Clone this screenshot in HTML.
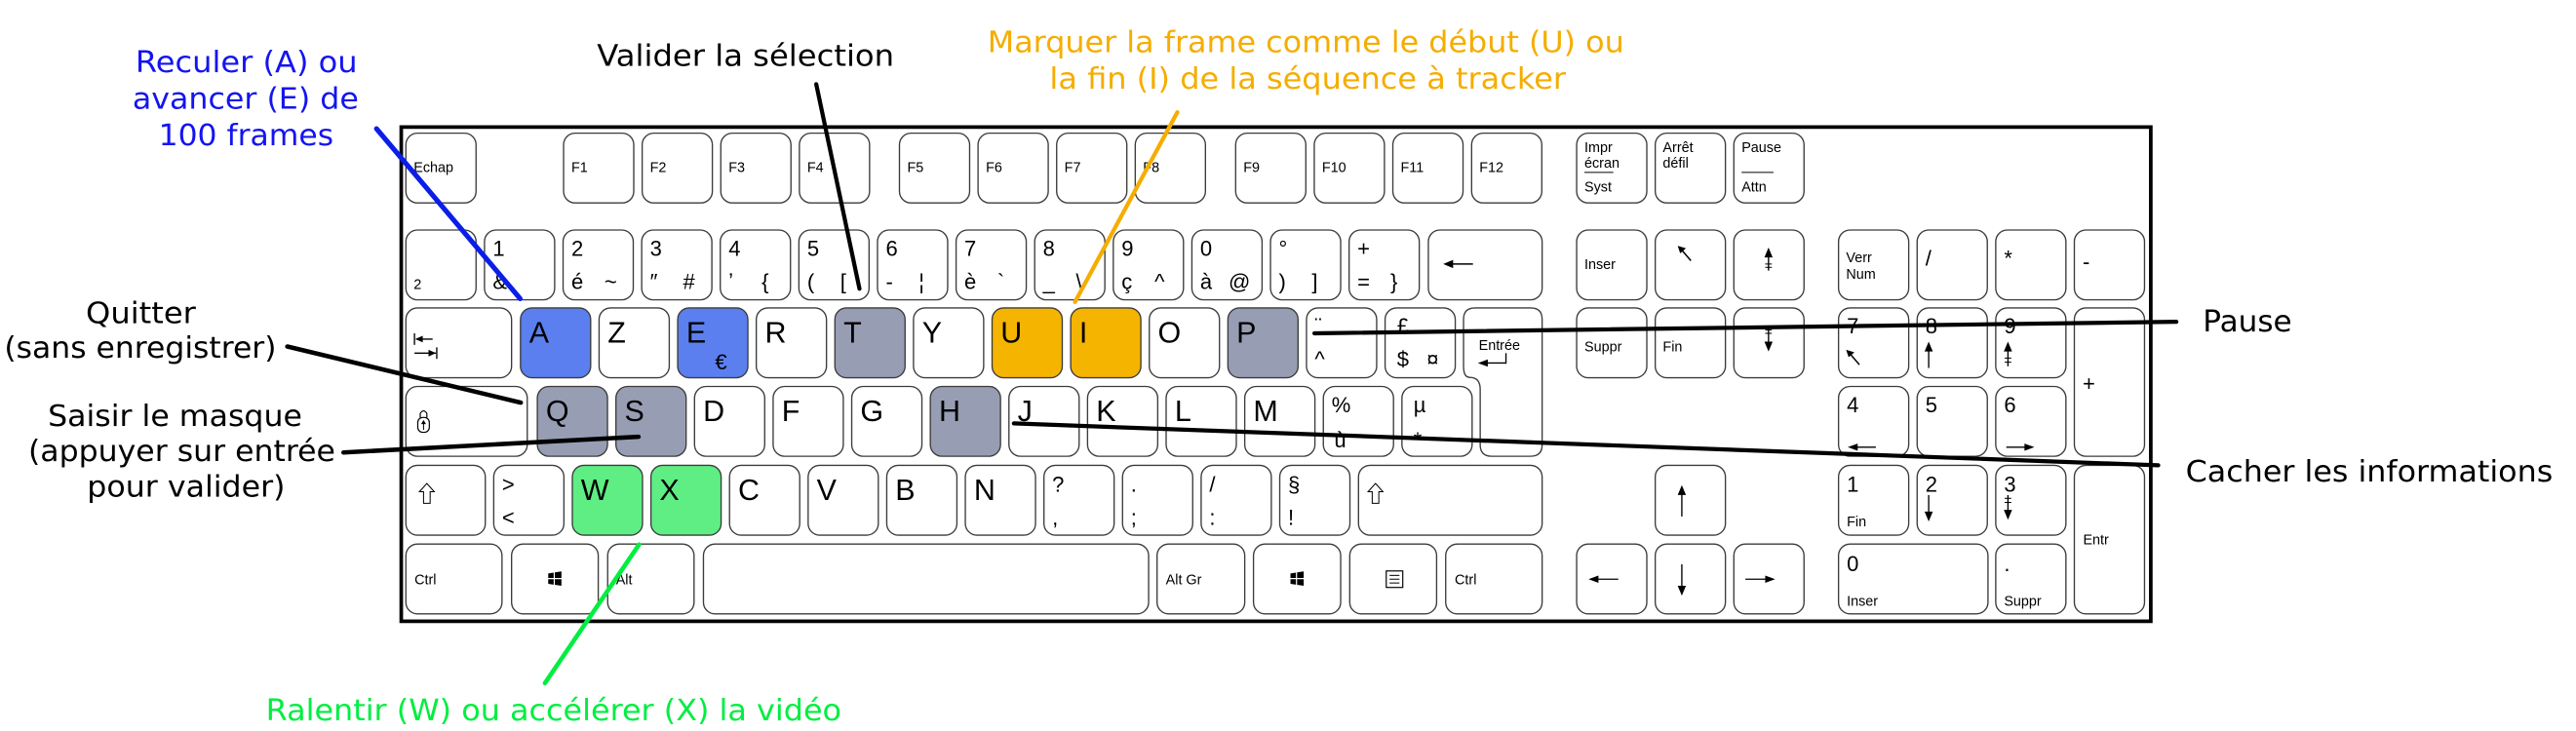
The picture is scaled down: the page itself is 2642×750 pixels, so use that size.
<!DOCTYPE html>
<html><head><meta charset="utf-8">
<style>
html,body{margin:0;padding:0;background:#fff;width:2642px;height:750px;overflow:hidden}
svg{display:block}
.k{fill:#fff;stroke:#3c3c3c;stroke-width:0.8}
.b{fill:#5b7fee}.g{fill:#979db3}.o{fill:#f5b400}.gr{fill:#5eee84}
text{font-family:"Liberation Sans","DejaVu Sans",sans-serif;fill:#000}
.L{font-size:18px}
.n{font-size:13px}
.s{font-size:8.5px}
.a{font-family:"DejaVu Sans","Liberation Sans",sans-serif;font-size:18px}
</style></head><body>
<svg width="2642" height="750" viewBox="0 0 1560 443" preserveAspectRatio="none" xmlns="http://www.w3.org/2000/svg">
<rect x="0" y="0" width="1560" height="443" fill="#fff"/>
<rect x="243" y="77" width="1059.5" height="299.5" fill="#fff" stroke="#000" stroke-width="2.2"/>
<g>
<!-- F row -->
<rect class="k" x="245.8" y="80.7" width="42.5" height="42.3" rx="7"/><text class="s" x="250.5" y="104.4">Echap</text>
<rect class="k" x="341.3" y="80.7" width="42.5" height="42.3" rx="7"/><text class="s" x="346" y="104.4">F1</text>
<rect class="k" x="388.9" y="80.7" width="42.5" height="42.3" rx="7"/><text class="s" x="393.6" y="104.4">F2</text>
<rect class="k" x="436.5" y="80.7" width="42.5" height="42.3" rx="7"/><text class="s" x="441.2" y="104.4">F3</text>
<rect class="k" x="484.1" y="80.7" width="42.5" height="42.3" rx="7"/><text class="s" x="488.8" y="104.4">F4</text>
<rect class="k" x="544.7" y="80.7" width="42.5" height="42.3" rx="7"/><text class="s" x="549.4" y="104.4">F5</text>
<rect class="k" x="592.3" y="80.7" width="42.5" height="42.3" rx="7"/><text class="s" x="597" y="104.4">F6</text>
<rect class="k" x="639.9" y="80.7" width="42.5" height="42.3" rx="7"/><text class="s" x="644.6" y="104.4">F7</text>
<rect class="k" x="687.5" y="80.7" width="42.5" height="42.3" rx="7"/><text class="s" x="692.2" y="104.4">F8</text>
<rect class="k" x="748.3" y="80.7" width="42.5" height="42.3" rx="7"/><text class="s" x="753" y="104.4">F9</text>
<rect class="k" x="795.9" y="80.7" width="42.5" height="42.3" rx="7"/><text class="s" x="800.6" y="104.4">F10</text>
<rect class="k" x="843.5" y="80.7" width="42.5" height="42.3" rx="7"/><text class="s" x="848.2" y="104.4">F11</text>
<rect class="k" x="891.2" y="80.7" width="42.5" height="42.3" rx="7"/><text class="s" x="895.9" y="104.4">F12</text>
<rect class="k" x="954.8" y="80.7" width="42.5" height="42.3" rx="7"/><text class="s" x="959.5" y="92">Impr</text><text class="s" x="959.5" y="101.5">écran</text><line x1="959.5" y1="104.5" x2="977" y2="104.5" stroke="#000" stroke-width="0.6"/><text class="s" x="959.5" y="116">Syst</text>
<rect class="k" x="1002.4" y="80.7" width="42.5" height="42.3" rx="7"/><text class="s" x="1007" y="92">Arrêt</text><text class="s" x="1007" y="101.5">défil</text>
<rect class="k" x="1050" y="80.7" width="42.5" height="42.3" rx="7"/><text class="s" x="1054.7" y="92">Pause</text><line x1="1054.7" y1="104.5" x2="1074" y2="104.5" stroke="#000" stroke-width="0.6"/><text class="s" x="1054.7" y="116">Attn</text>

<!-- Row 1 -->
<rect class="k" x="245.8" y="139.4" width="42.5" height="42.3" rx="7"/><text class="s" x="250.5" y="175">2</text>
<rect class="k" x="293.4" y="139.4" width="42.5" height="42.3" rx="7"/><text class="n" x="298.4" y="155">1</text><text class="n" x="298.4" y="175">&amp;</text>
<rect class="k" x="341" y="139.4" width="42.5" height="42.3" rx="7"/><text class="n" x="346" y="155">2</text><text class="n" x="346" y="175">é</text><text class="n" x="366" y="175">~</text>
<rect class="k" x="388.6" y="139.4" width="42.5" height="42.3" rx="7"/><text class="n" x="393.6" y="155">3</text><text class="n" x="393.6" y="175">″</text><text class="n" x="413.6" y="175">#</text>
<rect class="k" x="436.2" y="139.4" width="42.5" height="42.3" rx="7"/><text class="n" x="441.2" y="155">4</text><text class="n" x="441.2" y="175">ʼ</text><text class="n" x="461.2" y="175">{</text>
<rect class="k" x="483.8" y="139.4" width="42.5" height="42.3" rx="7"/><text class="n" x="488.8" y="155">5</text><text class="n" x="488.8" y="175">(</text><text class="n" x="508.8" y="175">[</text>
<rect class="k" x="531.4" y="139.4" width="42.5" height="42.3" rx="7"/><text class="n" x="536.4" y="155">6</text><text class="n" x="536.4" y="175">-</text><text class="n" x="556.4" y="175">¦</text>
<rect class="k" x="579" y="139.4" width="42.5" height="42.3" rx="7"/><text class="n" x="584" y="155">7</text><text class="n" x="584" y="175">è</text><text class="n" x="604" y="175">`</text>
<rect class="k" x="626.6" y="139.4" width="42.5" height="42.3" rx="7"/><text class="n" x="631.6" y="155">8</text><text class="n" x="631.6" y="175">_</text><text class="n" x="651.6" y="175">\</text>
<rect class="k" x="674.2" y="139.4" width="42.5" height="42.3" rx="7"/><text class="n" x="679.2" y="155">9</text><text class="n" x="679.2" y="175">ç</text><text class="n" x="699.2" y="175">^</text>
<rect class="k" x="721.8" y="139.4" width="42.5" height="42.3" rx="7"/><text class="n" x="726.8" y="155">0</text><text class="n" x="726.8" y="175">à</text><text class="n" x="744" y="175">@</text>
<rect class="k" x="769.4" y="139.4" width="42.5" height="42.3" rx="7"/><text class="n" x="774.4" y="155">°</text><text class="n" x="774.4" y="175">)</text><text class="n" x="794.4" y="175">]</text>
<rect class="k" x="817" y="139.4" width="42.5" height="42.3" rx="7"/><text class="n" x="822" y="155">+</text><text class="n" x="822" y="175">=</text><text class="n" x="842" y="175">}</text>
<rect class="k" x="865" y="139.4" width="68.9" height="42.3" rx="7"/><line x1="876" y1="160" x2="892" y2="160" stroke="#000" stroke-width="0.9"/><path d="M874,160 L880,157.5 L880,162.5 Z" fill="#000"/>
<rect class="k" x="954.8" y="139.4" width="42.5" height="42.3" rx="7"/><text class="s" x="959.5" y="163">Inser</text>
<rect class="k" x="1002.4" y="139.4" width="42.5" height="42.3" rx="7"/><line x1="1018" y1="151" x2="1024" y2="158" stroke="#000" stroke-width="0.9"/><path d="M1016,149 L1021,150.5 L1017.5,153.5 Z" fill="#000"/>
<rect class="k" x="1050" y="139.4" width="42.5" height="42.3" rx="7"/><line x1="1071" y1="152" x2="1071" y2="164" stroke="#000" stroke-width="0.8"/><path d="M1071,150 L1068.5,156 L1073.5,156 Z" fill="#000"/><line x1="1069" y1="160" x2="1073" y2="160" stroke="#000" stroke-width="0.6"/><line x1="1069" y1="162" x2="1073" y2="162" stroke="#000" stroke-width="0.6"/>
<rect class="k" x="1113.4" y="139.4" width="42.5" height="42.3" rx="7"/><text class="s" x="1118" y="159">Verr</text><text class="s" x="1118" y="169">Num</text>
<rect class="k" x="1161" y="139.4" width="42.5" height="42.3" rx="7"/><text class="n" x="1166" y="161">/</text>
<rect class="k" x="1208.6" y="139.4" width="42.5" height="42.3" rx="7"/><text class="n" x="1213.6" y="161">*</text>
<rect class="k" x="1256.2" y="139.4" width="42.5" height="42.3" rx="7"/><text class="n" x="1261.2" y="163">-</text>

<!-- Row 2 -->
<rect class="k" x="245.8" y="186.6" width="64" height="42.3" rx="7"/><line x1="251" y1="202" x2="251" y2="209" stroke="#000" stroke-width="0.8"/><line x1="252" y1="205.5" x2="262" y2="205.5" stroke="#000" stroke-width="0.8"/><path d="M251.5,205.5 L256,203.5 L256,207.5 Z" fill="#000"/><line x1="251" y1="214" x2="264" y2="214" stroke="#000" stroke-width="0.8"/><line x1="264.5" y1="210.5" x2="264.5" y2="217.5" stroke="#000" stroke-width="0.8"/><path d="M264,214 L259.5,212 L259.5,216 Z" fill="#000"/>
<rect class="k b" x="315.2" y="186.6" width="42.5" height="42.3" rx="7"/><text class="L" x="320.5" y="207.6">A</text>
<rect class="k" x="362.8" y="186.6" width="42.5" height="42.3" rx="7"/><text class="L" x="368" y="207.6">Z</text>
<rect class="k b" x="410.4" y="186.6" width="42.5" height="42.3" rx="7"/><text class="L" x="415.6" y="207.6">E</text><text class="n" x="433" y="224">€</text>
<rect class="k" x="458" y="186.6" width="42.5" height="42.3" rx="7"/><text class="L" x="463.2" y="207.6">R</text>
<rect class="k g" x="505.6" y="186.6" width="42.5" height="42.3" rx="7"/><text class="L" x="510.8" y="207.6">T</text>
<rect class="k" x="553.2" y="186.6" width="42.5" height="42.3" rx="7"/><text class="L" x="558.4" y="207.6">Y</text>
<rect class="k o" x="600.8" y="186.6" width="42.5" height="42.3" rx="7"/><text class="L" x="606" y="207.6">U</text>
<rect class="k o" x="648.4" y="186.6" width="42.5" height="42.3" rx="7"/><text class="L" x="653.6" y="207.6">I</text>
<rect class="k" x="696" y="186.6" width="42.5" height="42.3" rx="7"/><text class="L" x="701.2" y="207.6">O</text>
<rect class="k g" x="743.6" y="186.6" width="42.5" height="42.3" rx="7"/><text class="L" x="748.8" y="207.6">P</text>
<rect class="k" x="791.2" y="186.6" width="42.5" height="42.3" rx="7"/><text class="n" x="796.2" y="202">¨</text><text class="n" x="796.2" y="222">^</text>
<rect class="k" x="838.8" y="186.6" width="42.5" height="42.3" rx="7"/><text class="n" x="846" y="202">£</text><text class="n" x="846" y="222">$</text><text class="n" x="864" y="222">¤</text>
<path class="k" d="M893.3,186.6 H927 Q933.9,186.6 933.9,193.5 V269.6 Q933.9,276.5 927,276.5 H903.3 Q896.4,276.5 896.4,269.6 V236 Q896.4,228.7 890,228.7 Q886.3,228.7 886.3,222 V193.5 Q886.3,186.6 893.3,186.6 Z"/>
<text class="s" x="895.5" y="212">Entrée</text><line x1="897" y1="220" x2="912" y2="220" stroke="#000" stroke-width="0.8"/><line x1="912" y1="214" x2="912" y2="220.4" stroke="#000" stroke-width="0.8"/><path d="M895,220 L901,217.8 L901,222.2 Z" fill="#000"/>
<rect class="k" x="954.8" y="186.6" width="42.5" height="42.3" rx="7"/><text class="s" x="959.5" y="213">Suppr</text>
<rect class="k" x="1002.4" y="186.6" width="42.5" height="42.3" rx="7"/><text class="s" x="1007" y="213">Fin</text>
<rect class="k" x="1050" y="186.6" width="42.5" height="42.3" rx="7"/><line x1="1071" y1="198" x2="1071" y2="210" stroke="#000" stroke-width="0.8"/><path d="M1071,213 L1068.5,207 L1073.5,207 Z" fill="#000"/><line x1="1069" y1="200" x2="1073" y2="200" stroke="#000" stroke-width="0.6"/><line x1="1069" y1="202" x2="1073" y2="202" stroke="#000" stroke-width="0.6"/>
<rect class="k" x="1113.4" y="186.6" width="42.5" height="42.3" rx="7"/><text class="n" x="1118.4" y="202">7</text><line x1="1120" y1="214" x2="1126" y2="221" stroke="#000" stroke-width="0.9"/><path d="M1118,212 L1123,213.5 L1119.5,216.5 Z" fill="#000"/>
<rect class="k" x="1161" y="186.6" width="42.5" height="42.3" rx="7"/><text class="n" x="1166" y="202">8</text><line x1="1168" y1="210" x2="1168" y2="223" stroke="#000" stroke-width="0.8"/><path d="M1168,207 L1165.5,213 L1170.5,213 Z" fill="#000"/>
<rect class="k" x="1208.6" y="186.6" width="42.5" height="42.3" rx="7"/><text class="n" x="1213.6" y="202">9</text><line x1="1216" y1="210" x2="1216" y2="222" stroke="#000" stroke-width="0.8"/><path d="M1216,207 L1213.5,213 L1218.5,213 Z" fill="#000"/><line x1="1214" y1="217" x2="1218" y2="217" stroke="#000" stroke-width="0.6"/><line x1="1214" y1="219.5" x2="1218" y2="219.5" stroke="#000" stroke-width="0.6"/>
<rect class="k" x="1256.2" y="186.6" width="42.5" height="89.9" rx="7"/><text class="n" x="1261.2" y="237">+</text>

<!-- Row 3 -->
<rect class="k" x="245.8" y="234.2" width="73.5" height="42.3" rx="7"/><rect x="253" y="253" width="7" height="9" rx="3" fill="#fff" stroke="#000" stroke-width="0.7"/><path d="M254.5,253 V250.5 Q256.5,247.5 258.5,250.5 V253" fill="none" stroke="#000" stroke-width="0.7"/><path d="M256.5,254.5 L258,257 L255,257 Z M256.2,257 H256.8 V260.5 H256.2 Z" fill="#000"/>
<rect class="k g" x="325.4" y="234.2" width="42.5" height="42.3" rx="7"/><text class="L" x="330.6" y="255.2">Q</text>
<rect class="k g" x="373" y="234.2" width="42.5" height="42.3" rx="7"/><text class="L" x="378.2" y="255.2">S</text>
<rect class="k" x="420.6" y="234.2" width="42.5" height="42.3" rx="7"/><text class="L" x="425.8" y="255.2">D</text>
<rect class="k" x="468.2" y="234.2" width="42.5" height="42.3" rx="7"/><text class="L" x="473.4" y="255.2">F</text>
<rect class="k" x="515.8" y="234.2" width="42.5" height="42.3" rx="7"/><text class="L" x="521" y="255.2">G</text>
<rect class="k g" x="563.4" y="234.2" width="42.5" height="42.3" rx="7"/><text class="L" x="568.6" y="255.2">H</text>
<rect class="k" x="611" y="234.2" width="42.5" height="42.3" rx="7"/><text class="L" x="616.2" y="255.2">J</text>
<rect class="k" x="658.6" y="234.2" width="42.5" height="42.3" rx="7"/><text class="L" x="663.8" y="255.2">K</text>
<rect class="k" x="706.2" y="234.2" width="42.5" height="42.3" rx="7"/><text class="L" x="711.4" y="255.2">L</text>
<rect class="k" x="753.8" y="234.2" width="42.5" height="42.3" rx="7"/><text class="L" x="759" y="255.2">M</text>
<rect class="k" x="801.4" y="234.2" width="42.5" height="42.3" rx="7"/><text class="n" x="806.4" y="250">%</text><text class="n" x="808" y="271">ù</text>
<rect class="k" x="849" y="234.2" width="42.5" height="42.3" rx="7"/><text class="n" x="856" y="250">µ</text><text class="n" x="856" y="271">*</text>
<rect class="k" x="1113.4" y="234.2" width="42.5" height="42.3" rx="7"/><text class="n" x="1118.4" y="250">4</text><line x1="1122" y1="271" x2="1136" y2="271" stroke="#000" stroke-width="0.8"/><path d="M1119,271 L1125,268.8 L1125,273.2 Z" fill="#000"/>
<rect class="k" x="1161" y="234.2" width="42.5" height="42.3" rx="7"/><text class="n" x="1166" y="250">5</text>
<rect class="k" x="1208.6" y="234.2" width="42.5" height="42.3" rx="7"/><text class="n" x="1213.6" y="250">6</text><line x1="1215" y1="271" x2="1229" y2="271" stroke="#000" stroke-width="0.8"/><path d="M1232,271 L1226,268.8 L1226,273.2 Z" fill="#000"/>

<!-- Row 4 -->
<rect class="k" x="245.8" y="282" width="48.1" height="42.3" rx="7"/><path d="M254,298 L258.5,293 L263,298 L260.5,298 L260.5,305 L256.5,305 L256.5,298 Z" fill="#fff" stroke="#000" stroke-width="0.6"/>
<rect class="k" x="299" y="282" width="42.5" height="42.3" rx="7"/><text class="n" x="304" y="298">&gt;</text><text class="n" x="304" y="318">&lt;</text>
<rect class="k gr" x="346.6" y="282" width="42.5" height="42.3" rx="7"/><text class="L" x="351.8" y="303">W</text>
<rect class="k gr" x="394.2" y="282" width="42.5" height="42.3" rx="7"/><text class="L" x="399.4" y="303">X</text>
<rect class="k" x="441.8" y="282" width="42.5" height="42.3" rx="7"/><text class="L" x="447" y="303">C</text>
<rect class="k" x="489.4" y="282" width="42.5" height="42.3" rx="7"/><text class="L" x="494.6" y="303">V</text>
<rect class="k" x="537" y="282" width="42.5" height="42.3" rx="7"/><text class="L" x="542.2" y="303">B</text>
<rect class="k" x="584.6" y="282" width="42.5" height="42.3" rx="7"/><text class="L" x="589.8" y="303">N</text>
<rect class="k" x="632.2" y="282" width="42.5" height="42.3" rx="7"/><text class="n" x="637.2" y="298">?</text><text class="n" x="637.2" y="318">,</text>
<rect class="k" x="679.8" y="282" width="42.5" height="42.3" rx="7"/><text class="n" x="684.8" y="298">.</text><text class="n" x="684.8" y="318">;</text>
<rect class="k" x="727.4" y="282" width="42.5" height="42.3" rx="7"/><text class="n" x="732.4" y="298">/</text><text class="n" x="732.4" y="318">:</text>
<rect class="k" x="775" y="282" width="42.5" height="42.3" rx="7"/><text class="n" x="780" y="298">§</text><text class="n" x="780" y="318">!</text>
<rect class="k" x="822.7" y="282" width="111.2" height="42.3" rx="7"/><path d="M828.5,298 L833,293 L837.5,298 L835,298 L835,305 L831,305 L831,298 Z" fill="#fff" stroke="#000" stroke-width="0.6"/>
<rect class="k" x="1002.4" y="282" width="42.5" height="42.3" rx="7"/><line x1="1018.5" y1="297" x2="1018.5" y2="313" stroke="#000" stroke-width="0.8"/><path d="M1018.5,294 L1016,300 L1021,300 Z" fill="#000"/>
<rect class="k" x="1113.4" y="282" width="42.5" height="42.3" rx="7"/><text class="n" x="1118.4" y="298">1</text><text class="s" x="1118.4" y="319">Fin</text>
<rect class="k" x="1161" y="282" width="42.5" height="42.3" rx="7"/><text class="n" x="1166" y="298">2</text><line x1="1168" y1="300" x2="1168" y2="313" stroke="#000" stroke-width="0.8"/><path d="M1168,316 L1165.5,310 L1170.5,310 Z" fill="#000"/>
<rect class="k" x="1208.6" y="282" width="42.5" height="42.3" rx="7"/><text class="n" x="1213.6" y="298">3</text><line x1="1216" y1="300" x2="1216" y2="312" stroke="#000" stroke-width="0.8"/><path d="M1216,315 L1213.5,309 L1218.5,309 Z" fill="#000"/><line x1="1214" y1="302" x2="1218" y2="302" stroke="#000" stroke-width="0.6"/><line x1="1214" y1="304.5" x2="1218" y2="304.5" stroke="#000" stroke-width="0.6"/>
<rect class="k" x="1256.2" y="282" width="42.5" height="90" rx="7"/><text class="s" x="1261.5" y="330">Entr</text>

<!-- Row 5 -->
<rect class="k" x="245.8" y="329.7" width="58.2" height="42.3" rx="7"/><text class="s" x="251" y="354">Ctrl</text>
<rect class="k" x="309.8" y="329.7" width="52.5" height="42.3" rx="7"/><path d="M332,347.5 L335.3,347 L335.3,350.3 L332,350.3 Z M336,346.9 L340,346.3 L340,350.3 L336,350.3 Z M332,351 L335.3,351 L335.3,354.3 L332,353.8 Z M336,351 L340,351 L340,355 L336,354.4 Z" fill="#000"/>
<rect class="k" x="368" y="329.7" width="52.3" height="42.3" rx="7"/><text class="s" x="373" y="354">Alt</text>
<rect class="k" x="426" y="329.7" width="269.6" height="42.3" rx="7"/>
<rect class="k" x="700.7" y="329.7" width="53.1" height="42.3" rx="7"/><text class="s" x="706" y="354">Alt Gr</text>
<rect class="k" x="759.1" y="329.7" width="52.8" height="42.3" rx="7"/><path d="M781.5,347.5 L784.8,347 L784.8,350.3 L781.5,350.3 Z M785.5,346.9 L789.5,346.3 L789.5,350.3 L785.5,350.3 Z M781.5,351 L784.8,351 L784.8,354.3 L781.5,353.8 Z M785.5,351 L789.5,351 L789.5,355 L785.5,354.4 Z" fill="#000"/>
<rect class="k" x="817.4" y="329.7" width="52.6" height="42.3" rx="7"/><rect x="839.5" y="346" width="10" height="10" fill="#fff" stroke="#000" stroke-width="0.7"/><line x1="841.5" y1="348.7" x2="847.5" y2="348.7" stroke="#000" stroke-width="0.6"/><line x1="841.5" y1="351" x2="847.5" y2="351" stroke="#000" stroke-width="0.6"/><line x1="841.5" y1="353.3" x2="847.5" y2="353.3" stroke="#000" stroke-width="0.6"/>
<rect class="k" x="875.5" y="329.7" width="58.4" height="42.3" rx="7"/><text class="s" x="881" y="354">Ctrl</text>
<rect class="k" x="954.8" y="329.7" width="42.5" height="42.3" rx="7"/><line x1="965" y1="351" x2="980" y2="351" stroke="#000" stroke-width="0.8"/><path d="M962,351 L968,348.8 L968,353.2 Z" fill="#000"/>
<rect class="k" x="1002.4" y="329.7" width="42.5" height="42.3" rx="7"/><line x1="1018.5" y1="342" x2="1018.5" y2="358" stroke="#000" stroke-width="0.8"/><path d="M1018.5,361 L1016,355 L1021,355 Z" fill="#000"/>
<rect class="k" x="1050" y="329.7" width="42.5" height="42.3" rx="7"/><line x1="1057" y1="351" x2="1072" y2="351" stroke="#000" stroke-width="0.8"/><path d="M1075,351 L1069,348.8 L1069,353.2 Z" fill="#000"/>
<rect class="k" x="1113.4" y="329.7" width="90.5" height="42.3" rx="7"/><text class="n" x="1118.4" y="346">0</text><text class="s" x="1118.4" y="367">Inser</text>
<rect class="k" x="1208.6" y="329.7" width="42.5" height="42.3" rx="7"/><text class="n" x="1213.6" y="346">.</text><text class="s" x="1213.6" y="367">Suppr</text>
</g>

<!-- annotation lines -->
<g stroke-linecap="round">
<line x1="228" y1="78" x2="315" y2="181" stroke="#0a1ee8" stroke-width="3"/>
<line x1="494.3" y1="51" x2="520.5" y2="175" stroke="#000" stroke-width="2.5"/>
<line x1="713" y1="68" x2="651" y2="183" stroke="#f5ad00" stroke-width="2.5"/>
<line x1="174" y1="210" x2="315.4" y2="244" stroke="#000" stroke-width="2.7"/>
<line x1="208" y1="274.2" x2="386.7" y2="264.7" stroke="#000" stroke-width="2.7"/>
<line x1="330" y1="414" x2="387" y2="330" stroke="#00ee40" stroke-width="2.7"/>
<line x1="796" y1="202" x2="1318" y2="195" stroke="#000" stroke-width="2.5"/>
<line x1="614" y1="256.6" x2="1307" y2="282" stroke="#000" stroke-width="2.5"/>
</g>

<!-- annotation texts -->
<text class="a" x="82" y="43.7" textLength="134.5" lengthAdjust="spacingAndGlyphs" fill="#1414f0" style="fill:#1414f0">Reculer (A) ou</text>
<text class="a" x="80.2" y="66" textLength="137" lengthAdjust="spacingAndGlyphs" style="fill:#1414f0">avancer (E) de</text>
<text class="a" x="96" y="88" textLength="106" lengthAdjust="spacingAndGlyphs" style="fill:#1414f0">100 frames</text>
<text class="a" x="361.5" y="40" textLength="180" lengthAdjust="spacingAndGlyphs">Valider la sélection</text>
<text class="a" x="598" y="31.5" textLength="385.6" lengthAdjust="spacingAndGlyphs" style="fill:#f5ad00">Marquer la frame comme le début (U) ou</text>
<text class="a" x="635.6" y="53.7" textLength="312.7" lengthAdjust="spacingAndGlyphs" style="fill:#f5ad00">la fin (I) de la séquence à tracker</text>
<text class="a" x="52" y="195.8" textLength="66.6" lengthAdjust="spacingAndGlyphs">Quitter</text>
<text class="a" x="2.6" y="216.9" textLength="164.8" lengthAdjust="spacingAndGlyphs">(sans enregistrer)</text>
<text class="a" x="29" y="258" textLength="154" lengthAdjust="spacingAndGlyphs">Saisir le masque</text>
<text class="a" x="17.1" y="279.5" textLength="186" lengthAdjust="spacingAndGlyphs">(appuyer sur entrée</text>
<text class="a" x="52.7" y="301" textLength="120" lengthAdjust="spacingAndGlyphs">pour valider)</text>
<text class="a" x="1334" y="200.8" textLength="54" lengthAdjust="spacingAndGlyphs">Pause</text>
<text class="a" x="1323.6" y="291.7" textLength="222.4" lengthAdjust="spacingAndGlyphs">Cacher les informations</text>
<text class="a" x="161" y="436.6" textLength="348.6" lengthAdjust="spacingAndGlyphs" style="fill:#00ee40">Ralentir (W) ou accélérer (X) la vidéo</text>
</svg>
</body></html>
